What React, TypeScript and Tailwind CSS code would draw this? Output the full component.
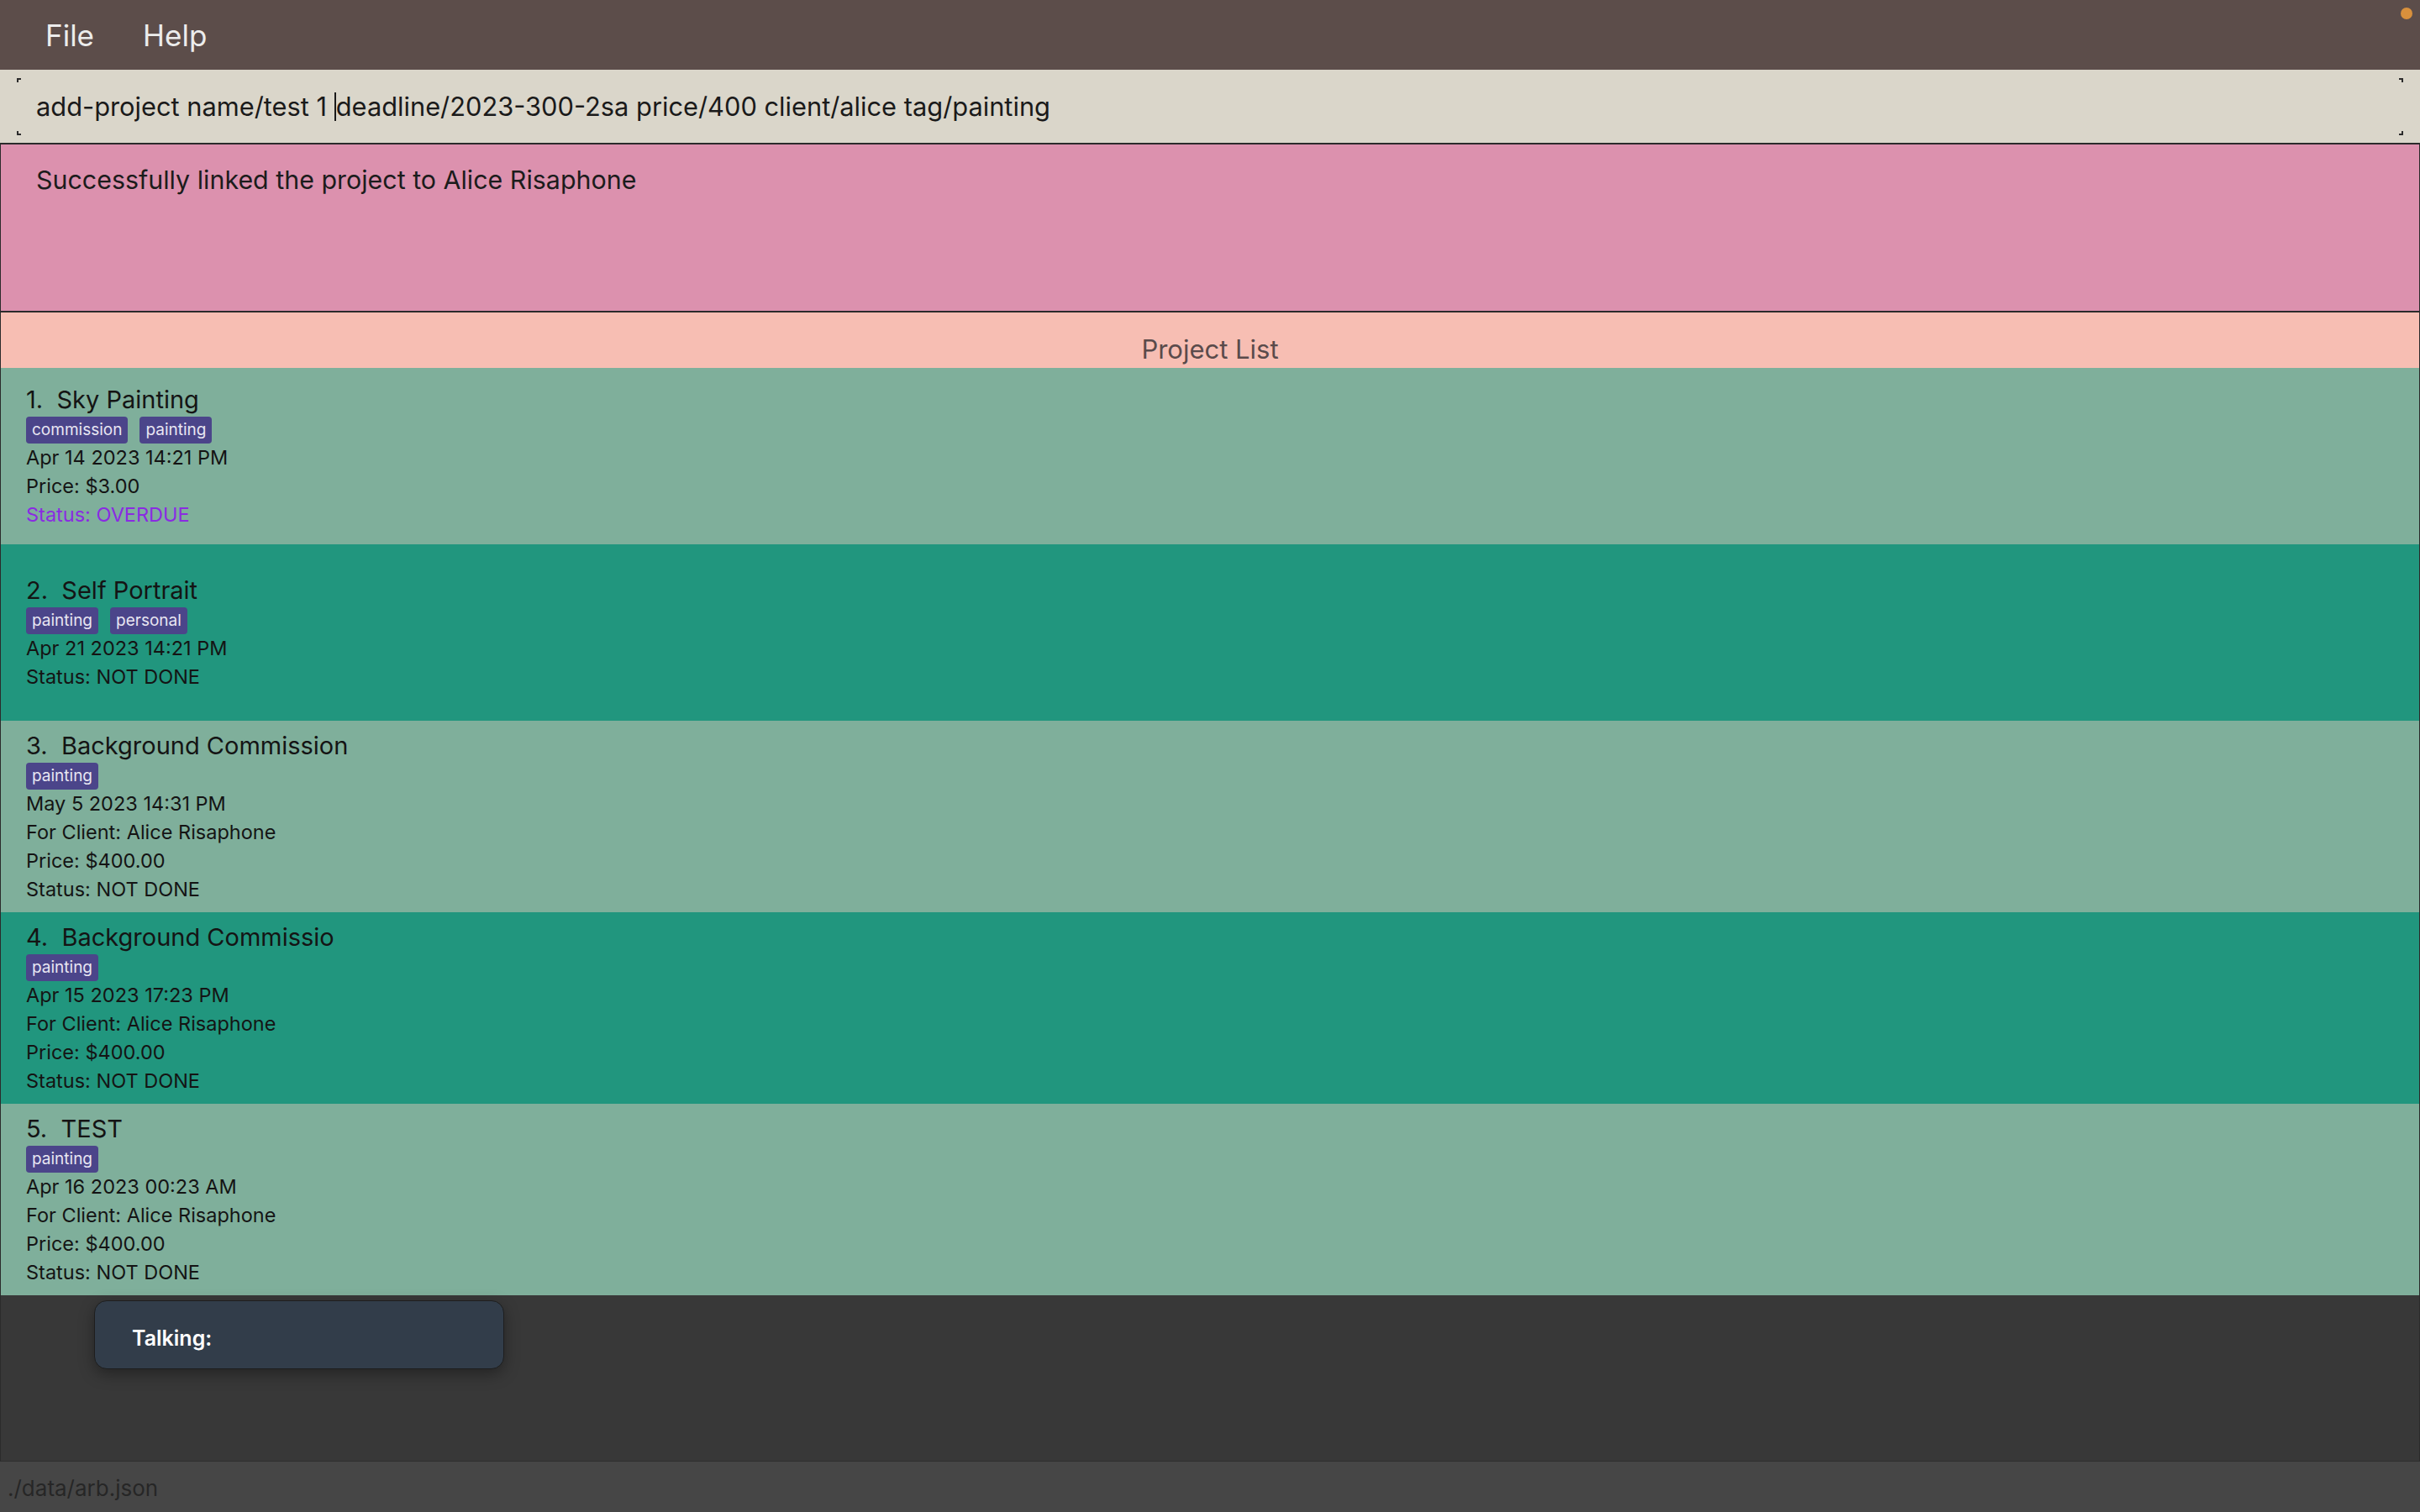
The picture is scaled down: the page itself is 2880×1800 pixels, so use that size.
import React from "react";

type Project = {
  title: string;
  tags: string[];
  deadline: string;
  client?: string;
  price?: string;
  status: string;
  overdue?: boolean;
};

const projects: Project[] = [
  { title: "Sky Painting", tags: ["commission", "painting"], deadline: "Apr 14 2023 14:21 PM", price: "$3.00", status: "OVERDUE", overdue: true },
  { title: "Self Portrait", tags: ["painting", "personal"], deadline: "Apr 21 2023 14:21 PM", status: "NOT DONE" },
  { title: "Background Commission", tags: ["painting"], deadline: "May 5 2023 14:31 PM", client: "Alice Risaphone", price: "$400.00", status: "NOT DONE" },
  { title: "Background Commissio", tags: ["painting"], deadline: "Apr 15 2023 17:23 PM", client: "Alice Risaphone", price: "$400.00", status: "NOT DONE" },
  { title: "TEST", tags: ["painting"], deadline: "Apr 16 2023 00:23 AM", client: "Alice Risaphone", price: "$400.00", status: "NOT DONE" },
];

const font = { fontFamily: "Inter, 'Noto Sans', sans-serif" };

function Corner({ className }: { className: string }) {
  return <span className={`absolute w-[5px] h-[5px] border-[#2b2b2b] ${className}`} />;
}

function ProjectCard({ project, index }: { project: Project; index: number }) {
  const bg = index % 2 === 0 ? "bg-[#7faf9b]" : "bg-[#21967e]";
  return (
    <div className={`${bg} min-h-[210px] flex flex-col justify-center pt-[12px] pb-[10px] pl-[30px] text-[#141414]`}>
      <div className="text-[29px] leading-[36px]">
        {index + 1}.&nbsp;&nbsp;{project.title}
      </div>
      <div className="flex gap-[14px] mt-[2px]">
        {project.tags.map((t) => (
          <span key={t} className="h-[32px] px-[7px] rounded-[4px] bg-[#4b458a] text-[#e8e6f2] text-[19px] leading-[32px]">
            {t}
          </span>
        ))}
      </div>
      <div className="text-[23.5px] leading-[34px]">
        <div>{project.deadline}</div>
        {project.client && <div>For Client: {project.client}</div>}
        {project.price && <div>Price: {project.price}</div>}
        <div className={project.overdue ? "text-[#8a2be2]" : ""}>Status: {project.status}</div>
      </div>
    </div>
  );
}

export default function App() {
  return (
    <div className="h-screen w-full flex flex-col bg-[#383838] overflow-hidden" style={font}>
      <div className="relative h-[83px] shrink-0 bg-[#5c4d4a] flex items-center pl-[54px] gap-[58px] text-[35px] leading-[42px] text-[#ececec]">
        <span>File</span>
        <span>Help</span>
        <span className="absolute right-[9px] top-[9px] w-[14px] h-[14px] rounded-full bg-[#d8903c]" />
      </div>

      <div className="relative h-[87px] shrink-0 bg-[#dad6ca] flex items-center pl-[43px] text-[30.8px] leading-[36px] text-[#1a1a1a]">
        <Corner className="left-[20px] top-[10px] border-l-2 border-t-2" />
        <Corner className="left-[20px] bottom-[9px] border-l-2 border-b-2" />
        <Corner className="right-[20px] top-[10px] border-r-2 border-t-2" />
        <Corner className="right-[20px] bottom-[9px] border-r-2 border-b-2" />
        <span className="whitespace-pre">add-project name/test 1 </span>
        <span className="w-[2px] h-[34px] bg-[#1a1a1a]" />
        <span className="whitespace-pre">deadline/2023-300-2sa price/400 client/alice tag/painting</span>
      </div>

      <div className="flex-1 flex flex-col border-x border-[#2b2b2b]">
        <div className="h-[202px] shrink-0 bg-[#dc91ae] border-y-2 border-[#2b2b2b] pt-[24px] pl-[42px] text-[30.4px] leading-[36px] text-[#1c1c1c]">
          Successfully linked the project to Alice Risaphone
        </div>

        <div className="h-[66px] shrink-0 bg-[#f7beb3] pt-[26px] text-center text-[31px] leading-[36px] text-[#5a4b4b]">
          Project List
        </div>

        <div className="flex flex-col shrink-0">
          {projects.map((p, i) => (
            <ProjectCard key={p.title} project={p} index={i} />
          ))}
        </div>

        <div className="flex-1 bg-[#383838] pt-[6px] pl-[111px]">
          <div className="w-[488px] h-[82px] rounded-[15px] bg-[#323d4a] border border-[#1e1e1e] shadow-[0_6px_18px_rgba(0,0,0,0.35)] flex items-center pl-[44px] pt-[10px] text-[25px] font-semibold text-white">
            Talking:
          </div>
        </div>
      </div>

      <div className="h-[61px] shrink-0 bg-[#464646] border-t border-[#2e2e2e] pl-[9px] pt-[16px] text-[26px] leading-[32px] text-[#262626]">
        ./data/arb.json
      </div>
    </div>
  );
}
